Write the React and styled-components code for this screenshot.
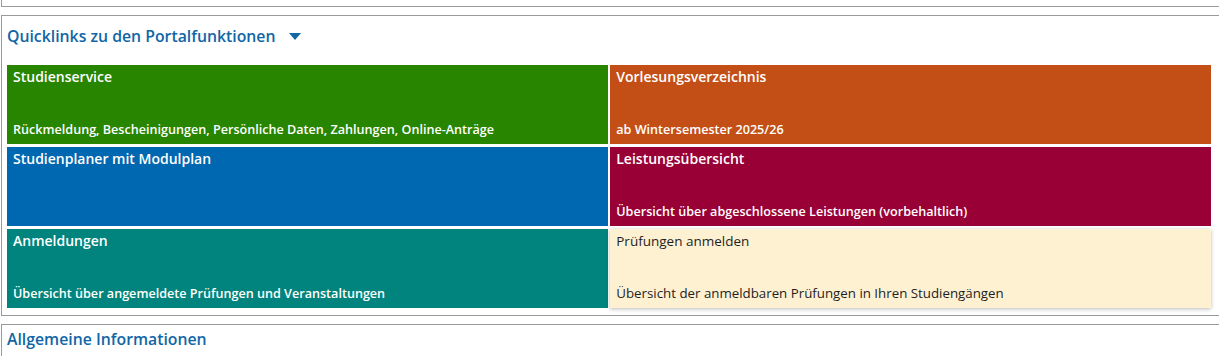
import React from "react";
import styled, { createGlobalStyle } from "styled-components";

const Global = createGlobalStyle`
  html, body { margin: 0; padding: 0; background: #fff; }
  body { font-family: "Open Sans", Lato, sans-serif; overflow: hidden; }
`;

const Page = styled.div`
  padding-left: 1px;
  display: flex;
  flex-direction: column;
  gap: 8px;
`;

const Panel = styled.section`
  border: 1px solid #9a9a9a;
  border-right: none;
  padding: 0 8px 7px 5px;
`;

const CutPanel = styled.div`
  border-left: 1px solid #9a9a9a;
  border-bottom: 1px solid #9a9a9a;
  height: 6px;
`;

const Heading = styled.h2`
  margin: 0;
  padding-top: ${(p) => p.$top || 10}px;
  margin-bottom: ${(p) => p.$bottom || 0}px;
  font-size: 15.8px;
  line-height: 21px;
  font-weight: 600;
  color: #1166a6;
  display: flex;
  align-items: center;
  gap: 13px;
`;

const Caret = styled.svg`
  width: 12px;
  height: 7px;
  fill: #1166a6;
`;

const Grid = styled.div`
  display: grid;
  grid-template-columns: 1fr 1fr;
  grid-auto-rows: 79px;
  gap: 3px 2.5px;
`;

const Tile = styled.a`
  display: flex;
  flex-direction: column;
  justify-content: space-between;
  padding: 3px 6px 6px;
  background: ${(p) => p.$bg};
  color: ${(p) => (p.$light ? "#1e1e1e" : "#fff")};
  box-shadow: ${(p) => (p.$light ? "0 1px 4px rgba(0,0,0,0.28)" : "none")};
  font-weight: ${(p) => (p.$light ? 400 : 600)};
  text-decoration: none;
`;

const TileTitle = styled.div`
  font-size: ${(p) => (p.$light ? 13.5 : 14)}px;
  line-height: 18px;
`;

const TileText = styled.div`
  font-size: ${(p) => (p.$light ? 13.3 : 12.6)}px;
  line-height: 17px;
`;

const tiles = [
  { t: "Studienservice", d: "Rückmeldung, Bescheinigungen, Persönliche Daten, Zahlungen, Online-Anträge", bg: "#288500" },
  { t: "Vorlesungsverzeichnis", d: "ab Wintersemester 2025/26", bg: "#c44f16" },
  { t: "Studienplaner mit Modulplan", d: "", bg: "#0068b0" },
  { t: "Leistungsübersicht", d: "Übersicht über abgeschlossene Leistungen (vorbehaltlich)", bg: "#990036" },
  { t: "Anmeldungen", d: "Übersicht über angemeldete Prüfungen und Veranstaltungen", bg: "#00847d" },
  { t: "Prüfungen anmelden", d: "Übersicht der anmeldbaren Prüfungen in Ihren Studiengängen", bg: "#fef1d2", light: true },
];

export default function App() {
  return (
    <>
      <Global />
      <Page>
        <CutPanel />
        <Panel>
          <Heading $bottom={18}>
            Quicklinks zu den Portalfunktionen
            <Caret viewBox="0 0 12 7">
              <path d="M0 0h12L6 7z" />
            </Caret>
          </Heading>
          <Grid>
            {tiles.map((x) => (
              <Tile key={x.t} href="#" $bg={x.bg} $light={x.light}>
                <TileTitle $light={x.light}>{x.t}</TileTitle>
                <TileText $light={x.light}>{x.d}</TileText>
              </Tile>
            ))}
          </Grid>
        </Panel>
        <Panel>
          <Heading $top={4}>Allgemeine Informationen</Heading>
        </Panel>
      </Page>
    </>
  );
}
